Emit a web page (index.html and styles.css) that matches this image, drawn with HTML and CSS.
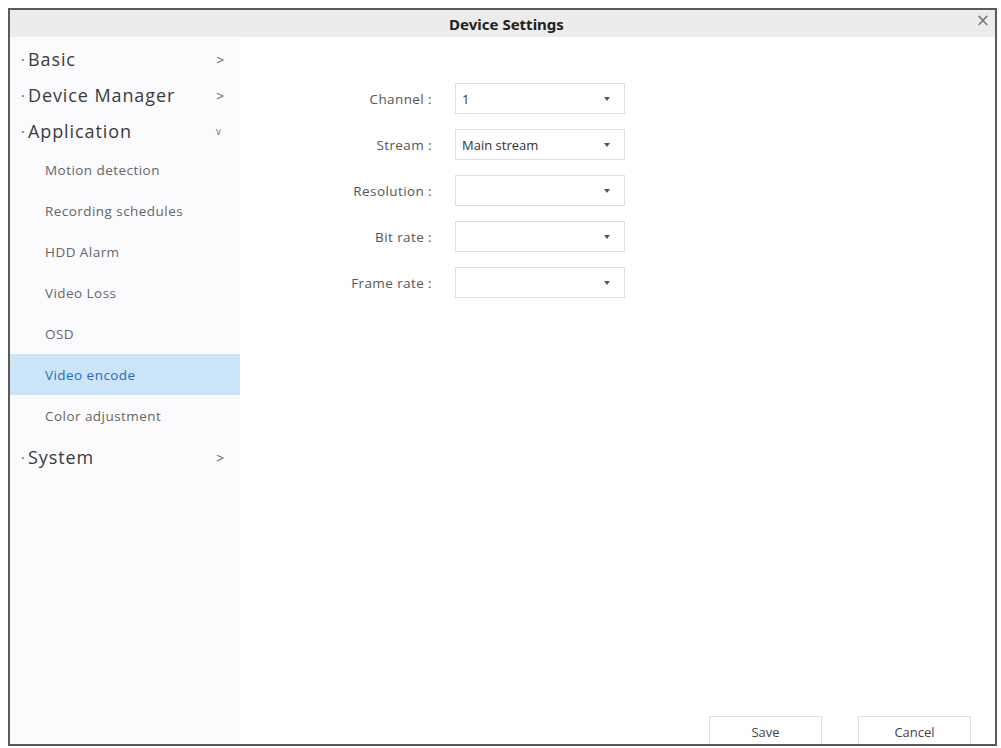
FILE: index.html
```html
<!DOCTYPE html>
<html lang="en">
<head>
<meta charset="utf-8">
<title>Device Settings</title>
<link rel="stylesheet" href="styles.css">
</head>
<body>
<div class="dialog">
  <div class="dialog-header">
    <span class="dialog-title">Device Settings</span>
    <span class="dialog-close">&#215;</span>
  </div>
  <div class="dialog-body">
    <nav class="sidebar">
      <div class="nav-group"><span class="nav-dot">·</span><span class="nav-label">Basic</span><span class="nav-chev">&gt;</span></div>
      <div class="nav-group"><span class="nav-dot">·</span><span class="nav-label">Device Manager</span><span class="nav-chev">&gt;</span></div>
      <div class="nav-group"><span class="nav-dot">·</span><span class="nav-label">Application</span><span class="nav-chev down">v</span></div>
      <div class="nav-sub">Motion detection</div>
      <div class="nav-sub">Recording schedules</div>
      <div class="nav-sub">HDD Alarm</div>
      <div class="nav-sub">Video Loss</div>
      <div class="nav-sub">OSD</div>
      <div class="nav-sub active">Video encode</div>
      <div class="nav-sub">Color adjustment</div>
      <div class="nav-group system"><span class="nav-dot">·</span><span class="nav-label">System</span><span class="nav-chev">&gt;</span></div>
    </nav>
    <main class="content">
      <div class="form">
        <label class="form-label">Channel :</label>
        <div class="select"><span class="select-value">1</span><span class="select-arrow"></span></div>
        <label class="form-label">Stream :</label>
        <div class="select"><span class="select-value">Main stream</span><span class="select-arrow"></span></div>
        <label class="form-label">Resolution :</label>
        <div class="select"><span class="select-value"></span><span class="select-arrow"></span></div>
        <label class="form-label">Bit rate :</label>
        <div class="select"><span class="select-value"></span><span class="select-arrow"></span></div>
        <label class="form-label">Frame rate :</label>
        <div class="select"><span class="select-value"></span><span class="select-arrow"></span></div>
      </div>
      <div class="footer">
        <button class="btn">Save</button>
        <button class="btn">Cancel</button>
      </div>
    </main>
  </div>
</div>
</body>
</html>
```
FILE: styles.css
```css
html, body {
  margin: 0;
  padding: 0;
  background: #ffffff;
}

body {
  font-family: "Open Sans", "Noto Sans", "Liberation Sans", sans-serif;
  color: #333;
}

.dialog {
  box-sizing: border-box;
  margin: 8px 0 0 8px;
  width: 989px;
  height: 738px;
  border: 2px solid #5a5a5a;
  display: flex;
  flex-direction: column;
  background: #fff;
}

.dialog-header {
  position: relative;
  height: 27px;
  flex: none;
  background: #ececec;
  display: flex;
  align-items: center;
  justify-content: center;
}

.dialog-title {
  font-family: "Noto Sans", "Open Sans", sans-serif;
  font-weight: 700;
  font-size: 15px;
  color: #222;
  margin-left: 8px;
}

.dialog-close {
  position: absolute;
  right: 5px;
  top: 0;
  font-size: 17px;
  line-height: 20px;
  color: #777;
  font-family: "DejaVu Sans", sans-serif;
}

.dialog-body {
  flex: 1;
  display: flex;
  min-height: 0;
}

.sidebar {
  width: 230px;
  flex: none;
  background: #fbfbfd;
  padding-top: 4px;
}

.nav-group {
  height: 36px;
  display: flex;
  align-items: center;
  font-size: 18px;
  letter-spacing: 0.9px;
  color: #3a3a3a;
  padding-left: 11px;
}

.nav-group.system {
  margin-top: 3px;
}

.nav-dot {
  width: 7px;
  font-size: 14px;
  letter-spacing: 0;
  color: #555;
}

.nav-label {
  flex: 1;
}

.nav-chev {
  width: 27px;
  font-size: 13px;
  letter-spacing: 0;
  color: #777;
  font-family: "DejaVu Sans", sans-serif;
  transform: scaleX(0.8);
}

.nav-chev.down {
  font-size: 11px;
}

.nav-sub {
  height: 41px;
  display: flex;
  align-items: center;
  padding-left: 35px;
  font-size: 13.5px;
  letter-spacing: 0.45px;
  color: #666;
}

.nav-sub.active {
  background: #cce4fa;
  color: #1a6fbf;
}

.content {
  flex: 1;
  display: flex;
  flex-direction: column;
}

.form {
  display: grid;
  grid-template-columns: 192px 170px;
  grid-auto-rows: 31px;
  column-gap: 23px;
  row-gap: 15px;
  padding-top: 46px;
  align-items: center;
}

.form-label {
  text-align: right;
  font-size: 13.5px;
  letter-spacing: 0.4px;
  color: #555;
}

.select {
  box-sizing: border-box;
  height: 31px;
  border: 1px solid #e0e0e0;
  display: flex;
  align-items: center;
  padding: 0 14px 0 6px;
  background: #fff;
}

.select-value {
  flex: 1;
  font-size: 13px;
  color: #333;
}

.select-arrow {
  width: 0;
  height: 0;
  border-left: 3px solid transparent;
  border-right: 3px solid transparent;
  border-top: 4px solid #555;
}

.footer {
  margin-top: auto;
  display: flex;
  justify-content: flex-end;
  gap: 36px;
  padding-right: 24px;
}

.btn {
  width: 113px;
  height: 28px;
  border: 1px solid #ddd;
  border-bottom: none;
  background: #fff;
  font-family: "Open Sans", sans-serif;
  font-size: 13px;
  color: #444;
  padding: 2px 0 0;
}
```
